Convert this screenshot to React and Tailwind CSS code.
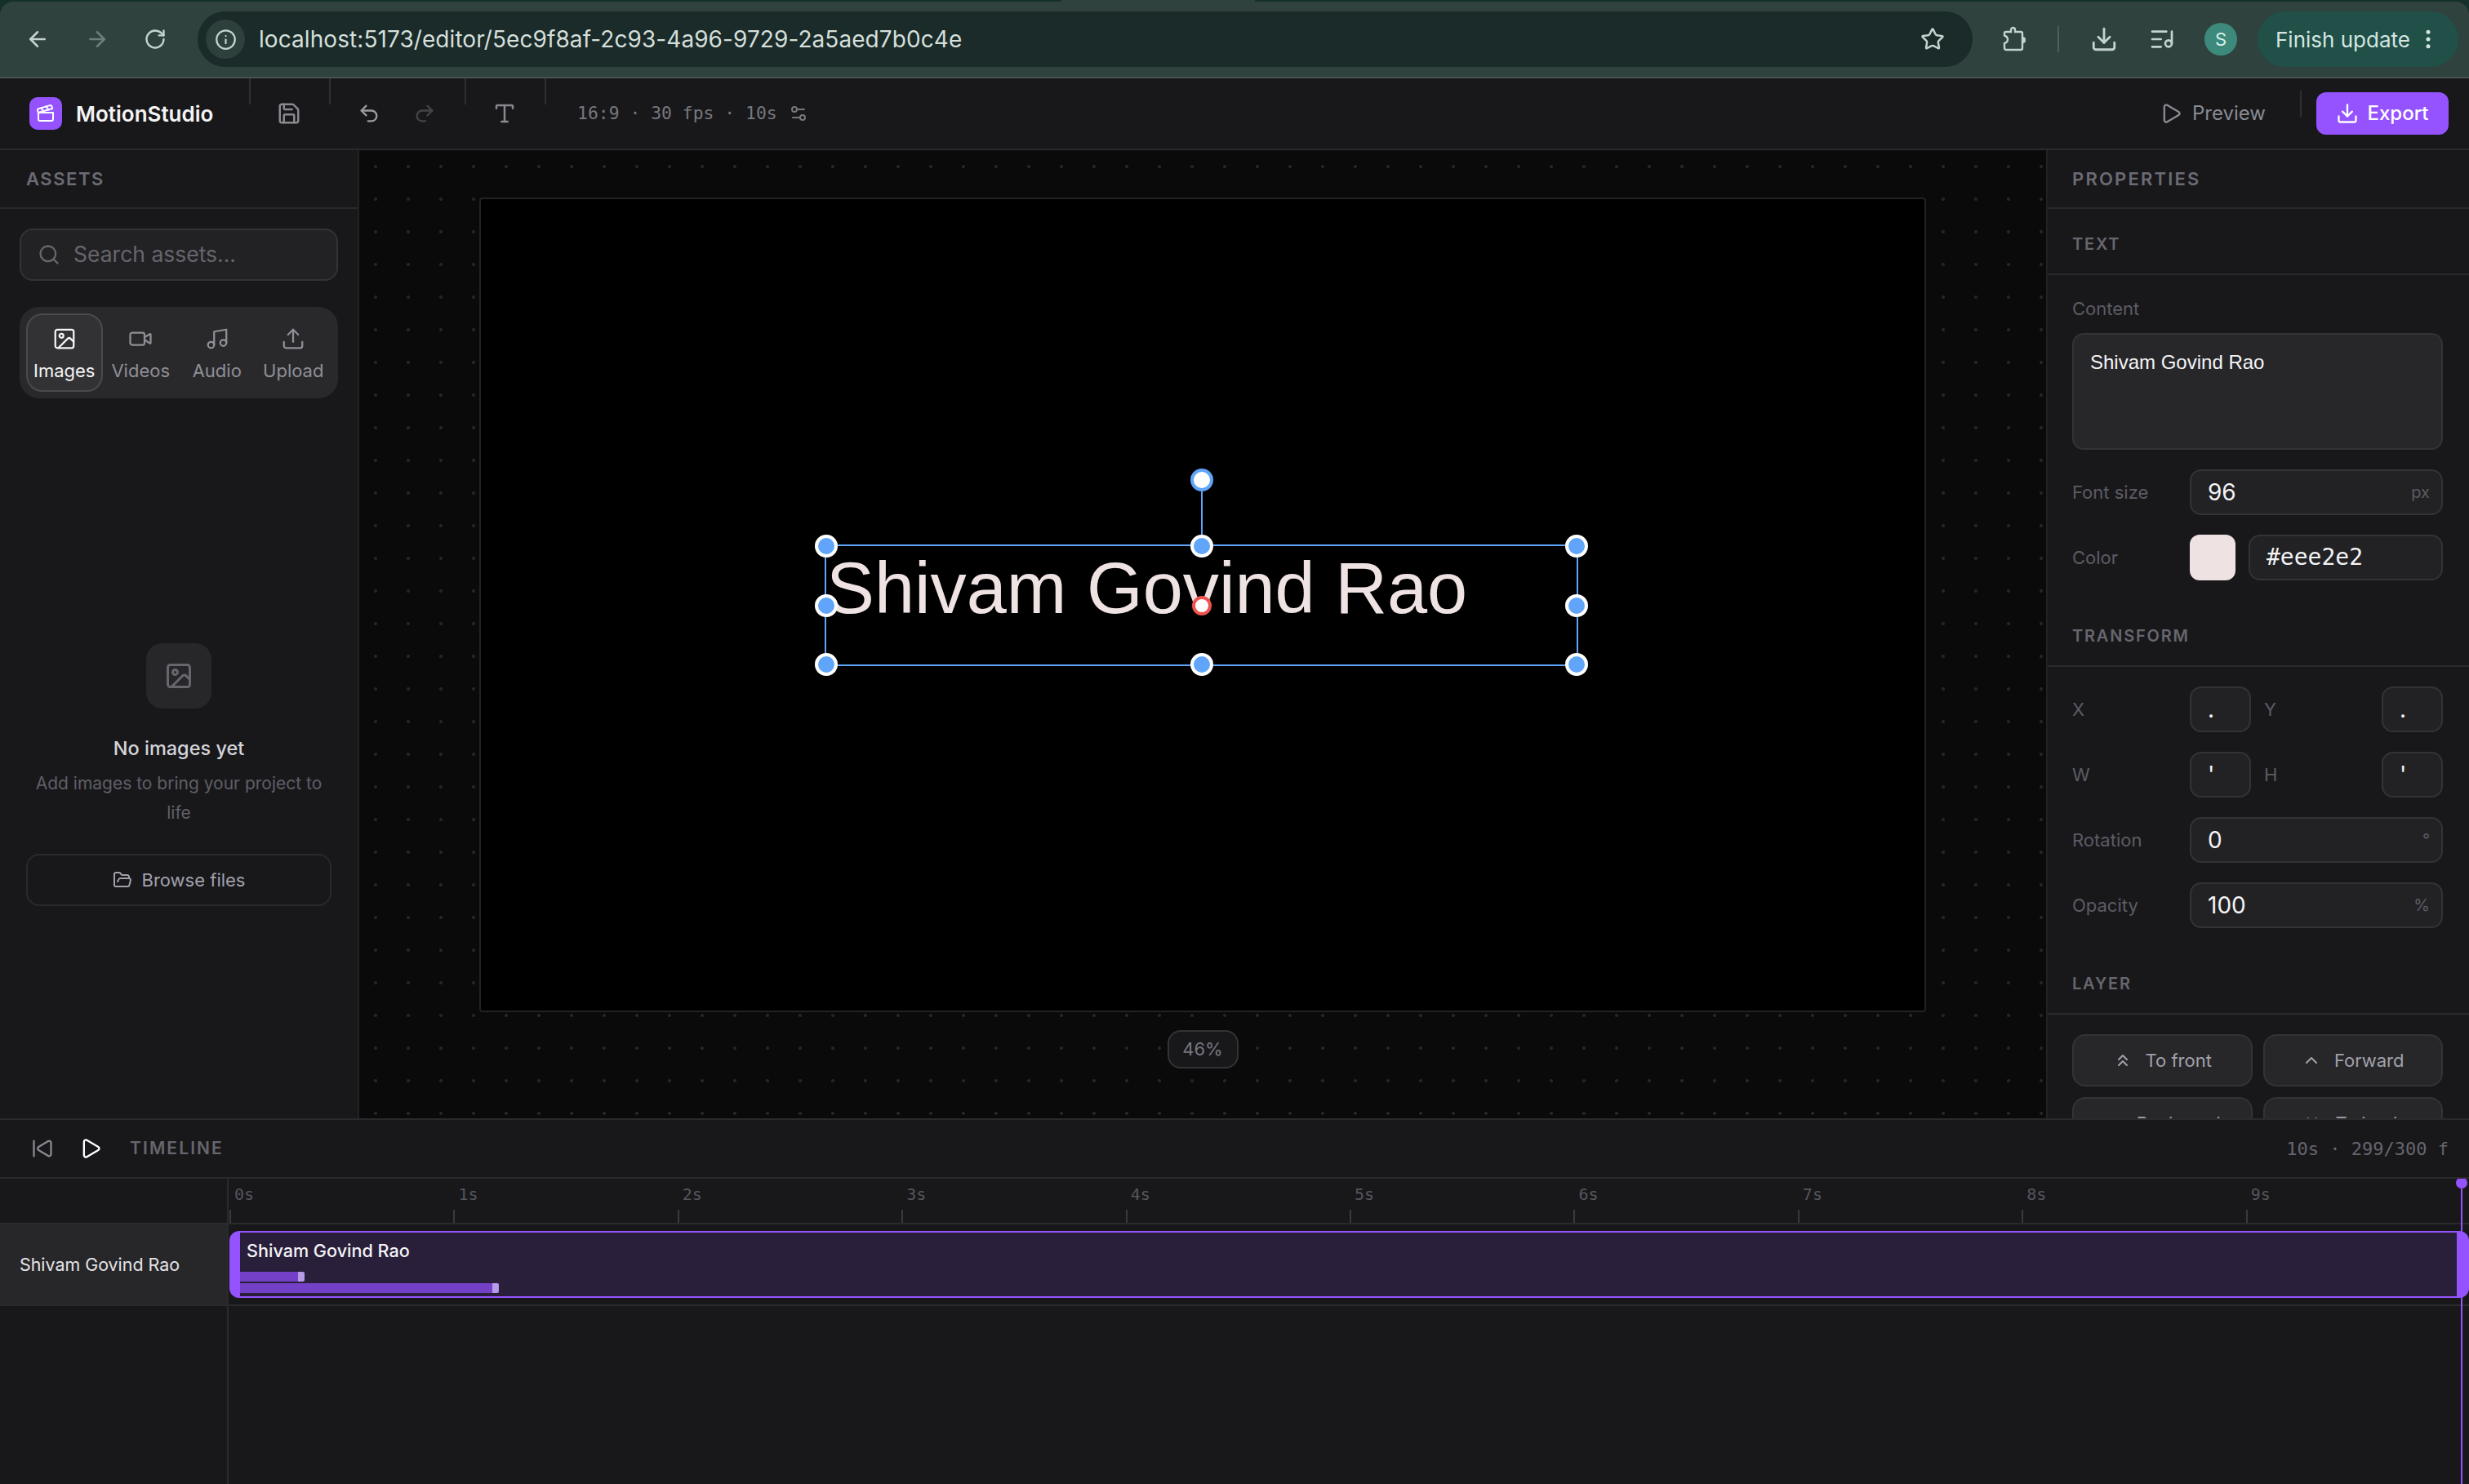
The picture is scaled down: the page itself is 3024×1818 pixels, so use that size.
import React from "react";
import {
  ArrowLeft,
  ArrowRight,
  ChevronDown,
  ChevronUp,
  ChevronsDown,
  ChevronsUp,
  Clapperboard,
  Download,
  EllipsisVertical,
  FolderOpen,
  Image,
  Info,
  ListMusic,
  Music,
  Play,
  Redo2,
  RotateCw,
  Save,
  Search,
  Settings2,
  SkipBack,
  Star,
  Type,
  Undo2,
  Upload,
  Video,
} from "lucide-react";

const assetTabs = [
  { label: "Images", icon: Image, active: true },
  { label: "Videos", icon: Video },
  { label: "Audio", icon: Music },
  { label: "Upload", icon: Upload },
];

const seconds = ["0s", "1s", "2s", "3s", "4s", "5s", "6s", "7s", "8s", "9s"];

// chrome's extension icon, lucide's Puzzle has another shape
function ExtensionIcon() {
  return (
    <svg width="32" height="32" viewBox="0 0 32 32" className="ml-[36px]" fill="none" stroke="currentColor" strokeWidth="2.4">
      <path d="M5 7h6V4.5a2.5 2.5 0 0 1 5 0V7h7a2 2 0 0 1 2 2v18a2 2 0 0 1-2 2H5a2 2 0 0 1-2-2v-6c3-1 4-2.5 4-4.5S6 12.5 3 11.5V9a2 2 0 0 1 2-2z" />
      <path d="M25 13c3 0 4 1.5 4 4s-1 4-4 4z" fill="currentColor" stroke="none" />
    </svg>
  );
}

function BrowserBar() {
  return (
    <div className="h-[96px] shrink-0 bg-[#14302b]">
      <div className="h-[2px] pl-[1300px]">
        <div className="h-full w-[237px] bg-[#2f423e]" />
      </div>
      <div className="flex h-[94px] items-center rounded-t-[16px] border-b-2 border-[#47544f] bg-[#2f423e] text-[#c4d3ce]">
        <ArrowLeft size={30} className="ml-[31px]" />
        <ArrowRight size={30} className="ml-[43px] text-[#6d7f79]" />
        <RotateCw size={28} className="ml-[42px]" />
        <div className="ml-[38px] flex h-[68px] w-[2174px] items-center rounded-full bg-[#1a2b29] pl-[10px] pr-[34px]">
          <div className="flex h-[48px] w-[48px] items-center justify-center rounded-full bg-[#2d403c]">
            <Info size={27} />
          </div>
          <span className="ml-[17px] text-[28px] tracking-[0.07px] text-[#d5dfdb]">
            localhost:5173/editor/5ec9f8af-2c93-4a96-9729-2a5aed7b0c4e
          </span>
          <Star size={30} className="ml-auto" />
        </div>
        <ExtensionIcon />
        <div className="ml-[36px] h-[32px] w-[2px] bg-[#4d5f5a]" />
        <Download size={34} className="ml-[38px]" />
        <ListMusic size={32} className="ml-[38px]" />
        <div className="ml-[36px] flex h-[40px] w-[40px] items-center justify-center rounded-full bg-[#3d8a7c] text-[22px] text-[#d9efe9]">
          S
        </div>
        <div className="ml-[25px] flex h-[68px] w-[246px] items-center rounded-full bg-[#205048] pl-[22px] text-[#d5e5e0]">
          <span className="text-[26px]">Finish update</span>
          <EllipsisVertical size={30} className="ml-[7px]" />
        </div>
      </div>
    </div>
  );
}

function AppHeader() {
  return (
    <header className="flex h-[88px] shrink-0 items-center border-b-2 border-[#2a2a2d] bg-[#18181b]">
      <div className="ml-[36px] flex w-[269px] shrink-0 items-center gap-[17px]">
        <div className="flex h-[40px] w-[40px] items-center justify-center rounded-[10px] bg-[#9553ff] text-white">
          <Clapperboard size={24} />
        </div>
        <span className="text-[26px] font-semibold text-[#f4f4f5]">MotionStudio</span>
      </div>
      <div className="h-[32px] w-[2px] self-start bg-[#2f2f32]" />
      <div className="flex w-[96px] justify-center pr-[3px] text-[#88888f]">
        <Save size={30} />
      </div>
      <div className="h-[32px] w-[2px] self-start bg-[#2f2f32]" />
      <div className="flex w-[164px] justify-center gap-[40px] pr-[3px]">
        <Undo2 size={28} className="text-[#9a9aa0]" />
        <Redo2 size={28} className="text-[#444448]" />
      </div>
      <div className="h-[32px] w-[2px] self-start bg-[#2f2f32]" />
      <div className="flex w-[96px] justify-center pr-[3px] text-[#88888f]">
        <Type size={30} />
      </div>
      <div className="h-[32px] w-[2px] self-start bg-[#2f2f32]" />
      <div className="ml-[38px] flex items-center gap-[14px] font-['DejaVu_Sans_Mono',monospace] text-[21.4px] text-[#77777e]">
        <span>16:9 · 30 fps · 10s</span>
        <Settings2 size={24} />
      </div>

      <div className="ml-auto flex items-center gap-[12px] text-[24px] text-[#8a8a92]">
        <Play size={28} />
        <span>Preview</span>
      </div>
      <div className="ml-[42px] mt-[15px] h-[32px] w-[2px] self-start bg-[#2f2f32]" />
      <button className="ml-[18px] mr-[25px] flex h-[52px] w-[162px] items-center justify-center gap-[10px] rounded-[12px] bg-[#9553ff] text-[24px] font-medium text-white">
        <Download size={28} />
        Export
      </button>
    </header>
  );
}

function AssetsPanel() {
  return (
    <aside className="flex w-[440px] shrink-0 flex-col border-r-2 border-[#222225] bg-[#18181b]">
      <div className="flex h-[72px] shrink-0 items-center border-b-2 border-[#2a2a2d] pl-[32px] text-[22px] font-semibold tracking-[0.07em] text-[#6b6b73]">
        ASSETS
      </div>
      <div className="mx-[24px] mt-[24px] flex h-[64px] items-center gap-[16px] rounded-[16px] border-2 border-[#333336] bg-[#222225] pl-[20px] text-[26.5px] text-[#66666d]">
        <Search size={28} />
        Search assets...
      </div>
      <div className="mx-[24px] mt-[32px] grid h-[112px] grid-cols-4 rounded-[24px] bg-[#29292c] p-[8px]">
        {assetTabs.map((tab) => {
          const Icon = tab.icon;
          return (
            <div
              key={tab.label}
              className={
                tab.active
                  ? "flex flex-col items-center rounded-[20px] border-2 border-[#4a4a4e] bg-[#323235] pt-[14px] text-[22px] text-[#f4f4f5]"
                  : "flex flex-col items-center rounded-[20px] border-2 border-transparent pt-[14px] text-[22px] text-[#8f8f96]"
              }
            >
              <Icon size={30} strokeWidth={1.8} />
              <span className="mt-[9px] leading-[30px]">{tab.label}</span>
            </div>
          );
        })}
      </div>
      <div className="mt-[300px] flex flex-col items-center px-[32px]">
        <div className="flex h-[80px] w-[80px] items-center justify-center rounded-[20px] bg-[#27272a] text-[#66666d]">
          <Image size={36} />
        </div>
        <div className="mt-[34px] text-[23.5px] font-medium leading-[30px] text-[#d4d4d8]">No images yet</div>
        <p className="mt-[10px] text-center text-[21px] leading-[36px] text-[#5f5f66]">
          Add images to bring your project to life
        </p>
        <button className="mt-[32px] flex h-[64px] w-full items-center justify-center gap-[12px] rounded-[16px] border-2 border-[#2a2a2d] text-[22px] text-[#a1a1aa]">
          <FolderOpen size={24} />
          Browse files
        </button>
      </div>
    </aside>
  );
}

function Handle({ className }) {
  return (
    <div
      className={`absolute h-[28px] w-[28px] -translate-x-1/2 -translate-y-1/2 rounded-full border-4 border-white bg-[#60a5fa] ${className}`}
    />
  );
}

function Stage() {
  return (
    <main className="flex min-w-0 flex-1 flex-col items-center bg-[#0a0a0a] bg-[radial-gradient(circle,#262626_1.5px,transparent_2.5px)] bg-[length:40px_40px] pt-[58px]">
      <div className="relative h-[998px] w-[1772px] shrink-0 rounded-[4px] border-2 border-[#222225] bg-black">
        <div className="absolute left-[421px] top-[423px] h-[149px] w-[923px] border-2 border-[#60a5fa]">
          <div className="-mt-px whitespace-nowrap font-['Liberation_Sans',sans-serif] text-[88.3px] leading-[106px] text-[#eee2e2]">
            Shivam Govind Rao
          </div>
          <div className="absolute bottom-full left-1/2 h-[68px] w-[2px] -translate-x-1/2 bg-[#60a5fa]" />
          <div className="absolute left-1/2 top-[-81px] h-[28px] w-[28px] -translate-x-1/2 -translate-y-1/2 rounded-full border-4 border-[#60a5fa] bg-white" />
          <Handle className="left-0 top-0" />
          <Handle className="left-1/2 top-0" />
          <Handle className="left-full top-0" />
          <Handle className="left-0 top-1/2" />
          <Handle className="left-full top-1/2" />
          <Handle className="left-0 top-full" />
          <Handle className="left-1/2 top-full" />
          <Handle className="left-full top-full" />
          <div className="absolute left-1/2 top-1/2 h-[24px] w-[24px] -translate-x-1/2 -translate-y-1/2 rounded-full border-4 border-[#ef5350] bg-white" />
        </div>
      </div>
      <div className="mt-[22px] flex h-[47px] w-[87px] items-center justify-center rounded-[16px] border-2 border-[#333336] bg-[#18181b] text-[22px] text-[#77777e]">
        46%
      </div>
    </main>
  );
}

function SectionHeader({ children }) {
  return (
    <div className="flex h-[81px] shrink-0 items-center border-b-2 border-[#2a2a2d] pl-[30px] pt-[7px] text-[20px] font-semibold tracking-[0.09em] text-[#66666d]">
      {children}
    </div>
  );
}

function Field({ value, suffix, className = "" }) {
  return (
    <div
      className={`flex h-[56px] items-center justify-between rounded-[14px] border-2 border-[#333336] bg-[#222225] pl-[20px] pr-[14px] text-[28px] text-[#f4f4f5] ${className}`}
    >
      <span>{value}</span>
      {suffix && <span className="text-[20px] text-[#5c5c63]">{suffix}</span>}
    </div>
  );
}

function Row({ label, children }) {
  return (
    <div className="flex items-center">
      <span className="w-[144px] shrink-0 text-[22px] text-[#5c5c63]">{label}</span>
      {children}
    </div>
  );
}

function PairRow({ first, second, value }) {
  return (
    <Row label={first}>
      <Field value={value} className="w-[75px] shrink-0" />
      <span className="ml-[16px] flex-1 text-[22px] text-[#5c5c63]">{second}</span>
      <Field value={value} className="w-[75px] shrink-0" />
    </Row>
  );
}

function LayerButton({ icon: Icon, label }) {
  return (
    <button className="flex h-[64px] items-center justify-center gap-[16px] rounded-[16px] border-2 border-[#333336] bg-[#27272a] text-[22px] text-[#a1a1aa]">
      <Icon size={24} />
      {label}
    </button>
  );
}

function PropertiesPanel() {
  return (
    <aside className="flex w-[518px] shrink-0 flex-col overflow-hidden border-l-2 border-[#222225] bg-[#18181b]">
      <div className="flex h-[72px] shrink-0 items-center border-b-2 border-[#2a2a2d] pl-[30px] text-[22px] font-semibold tracking-[0.1em] text-[#6b6b73]">
        PROPERTIES
      </div>
      <SectionHeader>TEXT</SectionHeader>
      <div className="flex shrink-0 flex-col gap-[24px] pb-[25px] pl-[30px] pr-[32px] pt-[25px]">
        <div>
          <div className="mb-[14px] text-[22px] leading-[32px] text-[#5c5c63]">Content</div>
          <div className="h-[143px] rounded-[14px] border-2 border-[#333336] bg-[#27272a] px-[20px] py-[19px] font-['Liberation_Sans',sans-serif] text-[24px] leading-[30px] text-[#f4f4f5]">
            Shivam Govind Rao
          </div>
        </div>
        <Row label="Font size">
          <Field value="96" suffix="px" className="flex-1" />
        </Row>
        <Row label="Color">
          <div className="h-[56px] w-[56px] shrink-0 rounded-[12px] bg-[#eee2e2]" />
          <Field value="#eee2e2" className="ml-[16px] flex-1 font-['DejaVu_Sans_Mono',monospace]" />
        </Row>
      </div>
      <SectionHeader>TRANSFORM</SectionHeader>
      <div className="flex shrink-0 flex-col gap-[24px] pb-[25px] pl-[30px] pr-[32px] pt-[24px]">
        <PairRow first="X" second="Y" value="." />
        <PairRow first="W" second="H" value="'" />
        <Row label="Rotation">
          <Field value="0" suffix="°" className="flex-1" />
        </Row>
        <Row label="Opacity">
          <Field value="100" suffix="%" className="flex-1" />
        </Row>
      </div>
      <SectionHeader>LAYER</SectionHeader>
      <div className="grid shrink-0 grid-cols-2 gap-[13px] pl-[30px] pr-[32px] pt-[24px]">
        <LayerButton icon={ChevronsUp} label="To front" />
        <LayerButton icon={ChevronUp} label="Forward" />
        <LayerButton icon={ChevronDown} label="Backward" />
        <LayerButton icon={ChevronsDown} label="To back" />
      </div>
    </aside>
  );
}

function KeyframeBar({ className }) {
  return (
    <div className={`flex h-[12px] justify-end bg-[#7540c8] ${className}`}>
      <div className="h-full w-[8px] rounded-r-[3px] bg-[#b79be6]" />
    </div>
  );
}

function Timeline() {
  return (
    <section className="flex h-[448px] shrink-0 flex-col border-t-2 border-[#2a2a2d] bg-[#18181b]">
      <div className="flex h-[72px] shrink-0 items-center border-b-2 border-[#2a2a2d] pl-[38px] pr-[25px]">
        <SkipBack size={28} className="text-[#88888f]" />
        <Play size={28} className="ml-[31px] text-white" />
        <span className="ml-[34px] text-[21px] font-semibold tracking-[0.1em] text-[#66666d]">TIMELINE</span>
        <span className="ml-auto whitespace-pre font-['DejaVu_Sans_Mono',monospace] text-[22px] text-[#66666d]">
          10s · 299/300 f
        </span>
      </div>
      <div className="relative flex min-h-0 flex-1 flex-col overflow-hidden">
        <div className="flex h-[56px] shrink-0 border-b-2 border-[#2a2a2d]">
          <div className="w-[280px] shrink-0 border-r-2 border-[#2a2a2d]" />
          <div className="flex flex-1">
            {seconds.map((s) => (
              <div key={s} className="flex flex-1 flex-col justify-between">
                <span className="pl-[7px] pt-[6px] font-['DejaVu_Sans_Mono',monospace] text-[20px] leading-[26px] text-[#55555c]">
                  {s}
                </span>
                <div className="ml-px h-[16px] w-[2px] bg-[#3a3a3e]" />
              </div>
            ))}
          </div>
        </div>
        <div className="flex h-[100px] shrink-0 border-b-2 border-[#2a2a2d]">
          <div className="flex w-[280px] shrink-0 items-center border-r-2 border-[#2a2a2d] bg-[#27272a] pl-[24px] text-[21.4px] text-[#e4e4e7]">
            Shivam Govind Rao
          </div>
          <div className="relative z-10 flex flex-1 pl-px py-[8px]">
            <div className="w-[13px] rounded-l-[12px] bg-[#9553ff]" />
            <div className="flex-1 border-y-2 border-[#9553ff] bg-[#291f3b]">
              <div className="pl-[8px] pt-[7px] text-[21.6px] font-medium leading-[30px] text-[#f4f4f5]">
                Shivam Govind Rao
              </div>
              <div className="mt-[11px] flex flex-col gap-[2px]">
                <KeyframeBar className="w-[79px]" />
                <KeyframeBar className="w-[317px]" />
              </div>
            </div>
            <div className="w-[15px] rounded-r-[12px] bg-[#9553ff]" />
          </div>
        </div>
        <div className="flex flex-1">
          <div className="w-[280px] shrink-0 border-r-2 border-[#2a2a2d]" />
        </div>
        <div className="absolute inset-y-0 right-[8px] w-[2px] bg-[#9553ff]">
          <div className="absolute left-1/2 top-[-2px] h-[14px] w-[14px] -translate-x-1/2 rounded-full bg-[#9553ff]" />
        </div>
      </div>
    </section>
  );
}

export default function App() {
  return (
    <div className="flex h-[1818px] w-[3024px] flex-col overflow-hidden bg-[#18181b] font-[Inter,sans-serif]">
      <BrowserBar />
      <AppHeader />
      <div className="flex min-h-0 flex-1">
        <AssetsPanel />
        <Stage />
        <PropertiesPanel />
      </div>
      <Timeline />
    </div>
  );
}
